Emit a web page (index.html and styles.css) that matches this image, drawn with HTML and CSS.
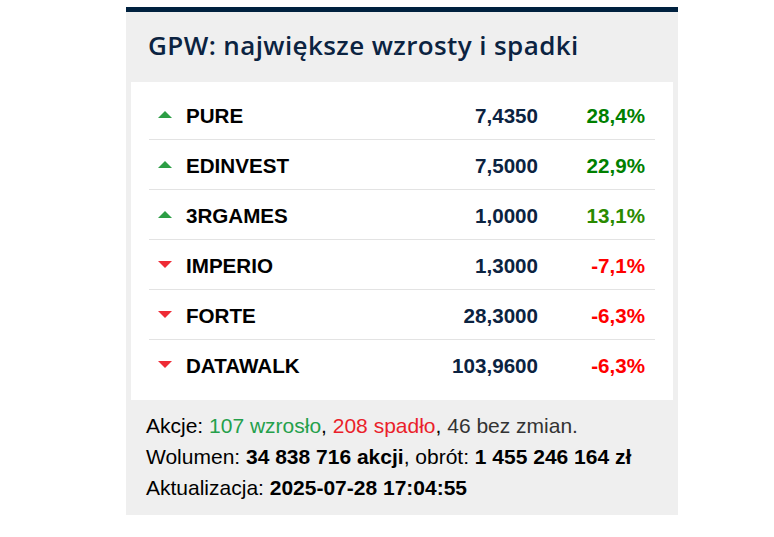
FILE: index.html
```html
<!DOCTYPE html>
<html lang="pl">
<head>
<meta charset="utf-8">
<title>GPW: największe wzrosty i spadki</title>
<link rel="stylesheet" href="styles.css">
</head>
<body>
<div class="card">
  <h2 class="title">GPW: największe wzrosty i spadki</h2>
  <div class="list">
    <div class="row">
      <span class="tri up"></span><span class="name">PURE</span><span class="price">7,4350</span><span class="chg pos">28,4%</span>
    </div>
    <div class="row">
      <span class="tri up"></span><span class="name">EDINVEST</span><span class="price">7,5000</span><span class="chg pos">22,9%</span>
    </div>
    <div class="row">
      <span class="tri up"></span><span class="name">3RGAMES</span><span class="price">1,0000</span><span class="chg pos2">13,1%</span>
    </div>
    <div class="row">
      <span class="tri down"></span><span class="name">IMPERIO</span><span class="price">1,3000</span><span class="chg neg">-7,1%</span>
    </div>
    <div class="row">
      <span class="tri down"></span><span class="name">FORTE</span><span class="price">28,3000</span><span class="chg neg">-6,3%</span>
    </div>
    <div class="row">
      <span class="tri down"></span><span class="name">DATAWALK</span><span class="price">103,9600</span><span class="chg neg">-6,3%</span>
    </div>
  </div>
  <div class="summary">
    <p>Akcje: <span class="g">107 wzrosło</span>, <span class="r">208 spadło</span>, <span class="n">46 bez zmian.</span></p>
    <p>Wolumen: <b>34 838 716 akcji</b>, obrót: <b>1 455 246 164 zł</b></p>
    <p>Aktualizacja: <b>2025-07-28 17:04:55</b></p>
  </div>
</div>
</body>
</html>
```
FILE: styles.css
```css
html, body {
  margin: 0;
  padding: 0;
  background: #ffffff;
}
body {
  padding-top: 7px;
  font-family: "Liberation Sans", Arial, sans-serif;
}
.card {
  margin-left: 126px;
  width: 552px;
  background: #efefef;
  border-top: 5px solid #00213f;
  box-sizing: border-box;
}
.title {
  margin: 0;
  height: 70px;
  box-sizing: border-box;
  padding: 16px 0 0 22px;
  font-family: "Open Sans", "Noto Sans", sans-serif;
  font-weight: 600;
  font-size: 26px;
  line-height: 34px;
  color: #0b2341;
  letter-spacing: 0.4px;
  white-space: nowrap;
}
.list {
  margin: 0 5px;
  background: #ffffff;
  padding: 8px 18px 10px 18px;
}
.row {
  display: flex;
  align-items: center;
  height: 50px;
  box-sizing: border-box;
  padding: 2px 10px 0 9px;
  border-bottom: 1px solid #e3e3e3;
  font-weight: bold;
  font-size: 20.6px;
}
.row:last-child {
  border-bottom: none;
}
.tri {
  width: 0;
  height: 0;
  margin-right: 14px;
  border-left: 7px solid transparent;
  border-right: 7px solid transparent;
}
.tri.up {
  border-bottom: 7px solid #2c9e45;
  margin-top: -2px;
}
.tri.down {
  border-top: 7px solid #ee2b36;
  margin-top: -3px;
}
.name {
  flex: 1;
  color: #000000;
}
.price {
  color: #0b2341;
  text-align: right;
}
.chg {
  width: 107px;
  text-align: right;
}
.pos { color: #008000; }
.pos2 { color: #2a8a00; }
.neg { color: #ff0000; }
.summary {
  padding: 10px 10px 12px 20px;
  font-size: 21px;
  line-height: 31px;
  color: #000000;
}
.summary p {
  margin: 0;
  white-space: nowrap;
}
.summary .g { color: #24a04b; }
.summary .r { color: #ea1f2b; }
.summary .n { color: #333333; }
```
